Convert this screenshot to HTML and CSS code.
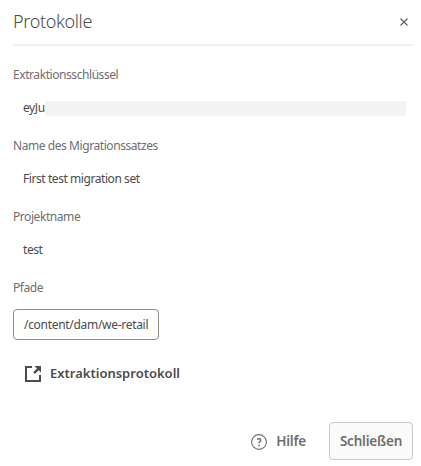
FILE: index.html
```html
<!DOCTYPE html>
<html lang="de">
<head>
<meta charset="utf-8">
<title>Protokolle</title>
<link rel="stylesheet" href="styles.css">
</head>
<body>
<section class="dialog" role="dialog">
  <header class="header">
    <h1 class="title">Protokolle</h1>
    <button class="close" aria-label="Schließen"><svg width="8" height="8" viewBox="0 0 8 8"><path d="M.5.5l7 7M7.5.5l-7 7" stroke="#606060" stroke-width="1.2"/></svg></button>
  </header>
  <dl class="fields">
    <dt class="label">Extraktionsschlüssel</dt>
    <dd class="value key"><span>eyJu</span><span class="mask"></span></dd>
    <dt class="label">Name des Migrationssatzes</dt>
    <dd class="value">First test migration set</dd>
    <dt class="label">Projektname</dt>
    <dd class="value">test</dd>
    <dt class="label">Pfade</dt>
  </dl>
  <div class="tag">/content/dam/we-retail</div>
  <a class="log"><svg width="18" height="18" viewBox="0 0 18 18"><path d="M8 2H2v14h14v-6" fill="none" stroke="#4b4b4b" stroke-width="2"/><path d="M10.5 1H17v6.5l-2.3-2.3-3.8 3.8-1.7-1.7L13 3.5z" fill="#4b4b4b"/></svg><span>Extraktionsprotokoll</span></a>
  <footer class="footer">
    <button class="help"><svg width="16" height="16" viewBox="0 0 16 16" fill="none" stroke="#6e6e6e"><circle cx="8" cy="8" r="7.4" stroke-width="1.1"/><path d="M6 5.3C7.8 4.1 9.7 4.8 9.7 6.2 9.7 7.4 8 7.7 8 9.3" stroke-width="1.5"/><circle cx="8" cy="11.4" r=".9" fill="#6e6e6e" stroke="none"/></svg><span>Hilfe</span></button>
    <button class="dismiss">Schließen</button>
  </footer>
</section>
</body>
</html>
```
FILE: styles.css
```css
* { box-sizing: border-box; }
body { margin: 0; background: #fff; font-family: "Noto Sans", sans-serif; font-size: 12px; color: #4b4b4b; }
button { font: inherit; letter-spacing: inherit; padding: 0; border: 0; background: none; }
svg { display: block; flex: none; }
.dialog { width: 421px; height: 466px; padding: 0 8px 6px 13px; display: flex; flex-direction: column; overflow: hidden; white-space: nowrap; }
.header { height: 46px; padding: 0 5px 2px 0; display: flex; align-items: center; justify-content: space-between; border-bottom: 2px solid #f0f0f0; width: 400px; }
.close { padding-top: 2px; }
.title { margin: 0; font-size: 18px; line-height: 24px; font-weight: 300; letter-spacing: -.35px; }
.fields { margin: 19px 0 0; letter-spacing: -.43px; }
.label { height: 20px; line-height: 20px; color: #6e6e6e; }
.value { height: 20px; margin: 13px 0; padding: 0 7px 0 10px; line-height: 20px; }
.value + .label { margin-top: 18px; }
.key { display: flex; align-items: center; }
.mask { flex: 1; height: 15px; background: #f4f4f4; }
.tag { width: 146px; height: 31px; margin-top: 11px; padding-left: 10px; line-height: 29px; letter-spacing: -.3px; border: 1px solid #8e8e8e; border-radius: 4px; }
.log { height: 20px; margin: 23px 0 0 11px; display: flex; align-items: center; gap: 8px; font-size: 13px; font-weight: 600; }
.log svg { margin-top: 2px; }
.footer { margin-top: auto; display: flex; align-items: center; justify-content: flex-end; gap: 23px; font-size: 13.5px; font-weight: 600; letter-spacing: -.2px; }
.help { display: flex; align-items: center; gap: 9px; color: #6e6e6e; }
.help svg { margin-top: 2px; }
.dismiss { width: 84px; height: 38px; border: 1px solid #cacaca; border-radius: 4px; background: #fafafa; color: #6e6e6e; }
```
